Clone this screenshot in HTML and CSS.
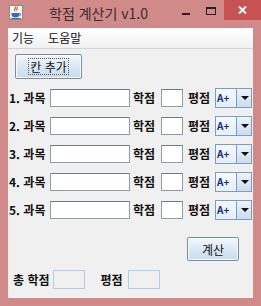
FILE: index.html
```html
<!DOCTYPE html>
<html lang="ko">
<head>
  <meta charset="UTF-8" />
  <title>학점 계산기 v1.0</title>
  <link rel="stylesheet" href="styles.css">
</head>
<body>
  <div class="window">
    <div class="titlebar">
      <svg class="app-icon" width="14" height="15" viewBox="0 0 14 15">
        <rect x="0.5" y="0.5" width="13" height="14" fill="#f4f4f4" stroke="#8a8a8a"/>
        <path d="M6 2c2 1-2 2 0 4M8 2c1.5 1-1.5 2 0 3.5" stroke="#e05a1a" fill="none" stroke-width="1.2"/>
        <path d="M2.5 8h8v1.5c0 2-1.5 3-4 3s-4-1-4-3z" fill="#3b6bb5"/>
        <path d="M10.5 8.5c1.5 0 1.5 2 0 2" stroke="#3b6bb5" fill="none"/>
        <rect x="2" y="13" width="10" height="1" fill="#3b6bb5"/>
      </svg>
      <span class="title">학점 계산기 v1.0</span>
      <div class="controls">
        <span class="ctl-min"></span>
        <span class="ctl-max"></span>
        <span class="ctl-close">
          <svg width="9" height="8" viewBox="0 0 9 8"><path d="M1 0.5l7 7M8 0.5l-7 7" stroke="#fff" stroke-width="2"/></svg>
        </span>
      </div>
    </div>
    <div class="menubar">
      <span class="menu">기능</span>
      <span class="menu">도움말</span>
    </div>
    <div class="client">
      <button class="btn btn-add"><span class="focus">칸 추가</span></button>

      <div class="rows">
        <div class="row">
          <span class="lbl">1. 과목</span>
          <input class="field name" type="text">
          <span class="lbl lbl-credit">학점</span>
          <input class="field credit" type="text">
          <span class="lbl lbl-grade">평점</span>
          <div class="combo"><span class="combo-val">A+</span><span class="combo-btn"></span></div>
        </div>
        <div class="row">
          <span class="lbl">2. 과목</span>
          <input class="field name" type="text">
          <span class="lbl lbl-credit">학점</span>
          <input class="field credit" type="text">
          <span class="lbl lbl-grade">평점</span>
          <div class="combo"><span class="combo-val">A+</span><span class="combo-btn"></span></div>
        </div>
        <div class="row">
          <span class="lbl">3. 과목</span>
          <input class="field name" type="text">
          <span class="lbl lbl-credit">학점</span>
          <input class="field credit" type="text">
          <span class="lbl lbl-grade">평점</span>
          <div class="combo"><span class="combo-val">A+</span><span class="combo-btn"></span></div>
        </div>
        <div class="row">
          <span class="lbl">4. 과목</span>
          <input class="field name" type="text">
          <span class="lbl lbl-credit">학점</span>
          <input class="field credit" type="text">
          <span class="lbl lbl-grade">평점</span>
          <div class="combo"><span class="combo-val">A+</span><span class="combo-btn"></span></div>
        </div>
        <div class="row">
          <span class="lbl">5. 과목</span>
          <input class="field name" type="text">
          <span class="lbl lbl-credit">학점</span>
          <input class="field credit" type="text">
          <span class="lbl lbl-grade">평점</span>
          <div class="combo"><span class="combo-val">A+</span><span class="combo-btn"></span></div>
        </div>
      </div>

      <div class="calc-wrap">
        <button class="btn btn-calc">계산</button>
      </div>

      <div class="result">
        <span class="lbl">총 학점</span>
        <input class="field out" type="text" readonly>
        <span class="lbl lbl-avg">평점</span>
        <input class="field out" type="text" readonly>
      </div>
    </div>
  </div>
</body>
</html>
```

FILE: styles.css
```css
body { margin: 0; padding: 0; background: #fff; font-family: "Noto Sans CJK KR", "Liberation Sans", sans-serif; }
.window { width: 261px; height: 306px; background: #d08a8a; box-sizing: border-box; padding: 0 8px 8px 8px; display: flex; flex-direction: column; }

.titlebar { height: 28px; display: flex; align-items: flex-start; position: relative; }
.app-icon { margin: 5px 0 0 1px; }
.title { margin: 4px 0 0 26px; font-size: 14px; color: #3a2a2a; line-height: 18px; }
.controls { position: absolute; right: -8px; top: 0; display: flex; align-items: flex-start; }
.ctl-min { width: 8px; height: 2px; background: #222; margin: 13px 16px 0 0; }
.ctl-max { width: 8px; height: 5px; border: 1px solid #222; border-top-width: 2px; margin: 7px 8px 0 0; }
.ctl-close { width: 37px; height: 20px; background: #c75252; display: flex; align-items: center; justify-content: center; }

.menubar { height: 20px; background: linear-gradient(#ffffff, #f1f1f1); border-bottom: 1px solid #d4d4d4; display: flex; align-items: center; font-size: 12px; color: #111; }
.menu { margin-left: 4px; margin-right: 10px; line-height: 18px; }

.client { flex: 1; background: #f0f0f0; padding: 5px 0 0 1px; display: flex; flex-direction: column; }

.btn { font-family: inherit; font-size: 12px; color: #111; border: 1px solid #7a8da3; border-radius: 2px; background: linear-gradient(#f3f7fb, #dce8f4 50%, #c9dbec); padding: 0; box-shadow: inset 0 0 0 1px #f8fbfd; }
.btn-add { width: 67px; height: 25px; margin-left: 6px; display: flex; align-items: center; justify-content: center; }
.focus { border: 1px dotted #555; padding: 0 1px; line-height: 15px; }

.rows { display: flex; flex-direction: column; gap: 8px; margin-top: 9px; }
.row { display: flex; align-items: center; height: 20px; }
.lbl { font-size: 12px; font-weight: bold; color: #111; white-space: nowrap; line-height: 14px; }
.row .lbl:first-child { width: 41px; }
.field { box-sizing: border-box; height: 18px; border: 1px solid #8f9ba6; border-top-color: #6f7b86; background: #fff; padding: 0; margin: 0; outline: none; }
.name { width: 80px; }
.lbl-credit { width: 28px; padding-left: 3px; }
.credit { width: 22px; }
.lbl-grade { width: 27px; padding-left: 5px; }
.combo { width: 37px; height: 20px; box-sizing: border-box; border: 1px solid #7a9cc4; display: flex; background: #fff; }
.combo-val { width: 19px; font-size: 10px; font-weight: bold; color: #1a2f7a; line-height: 18px; padding-left: 1px; background: linear-gradient(#f5f9fd, #e6eef8); }
.combo-btn { flex: 1; border-left: 1px solid #7a9cc4; background: linear-gradient(#eef4fb, #cadcee); position: relative; }
.combo-btn::after { content: ""; position: absolute; left: 4px; top: 7px; border-left: 4px solid transparent; border-right: 4px solid transparent; border-top: 4px solid #111; }

.calc-wrap { display: flex; justify-content: flex-end; margin-top: 17px; padding-right: 14px; }
.btn-calc { width: 52px; height: 24px; }

.result { display: flex; align-items: center; margin-top: 9px; padding-left: 4px; }
.out { width: 32px; height: 19px; background: #f0f0f0; border: 1px solid #b4cde4; margin-left: 4px; }
.lbl-avg { margin-left: 15px; width: 24px; }
```
